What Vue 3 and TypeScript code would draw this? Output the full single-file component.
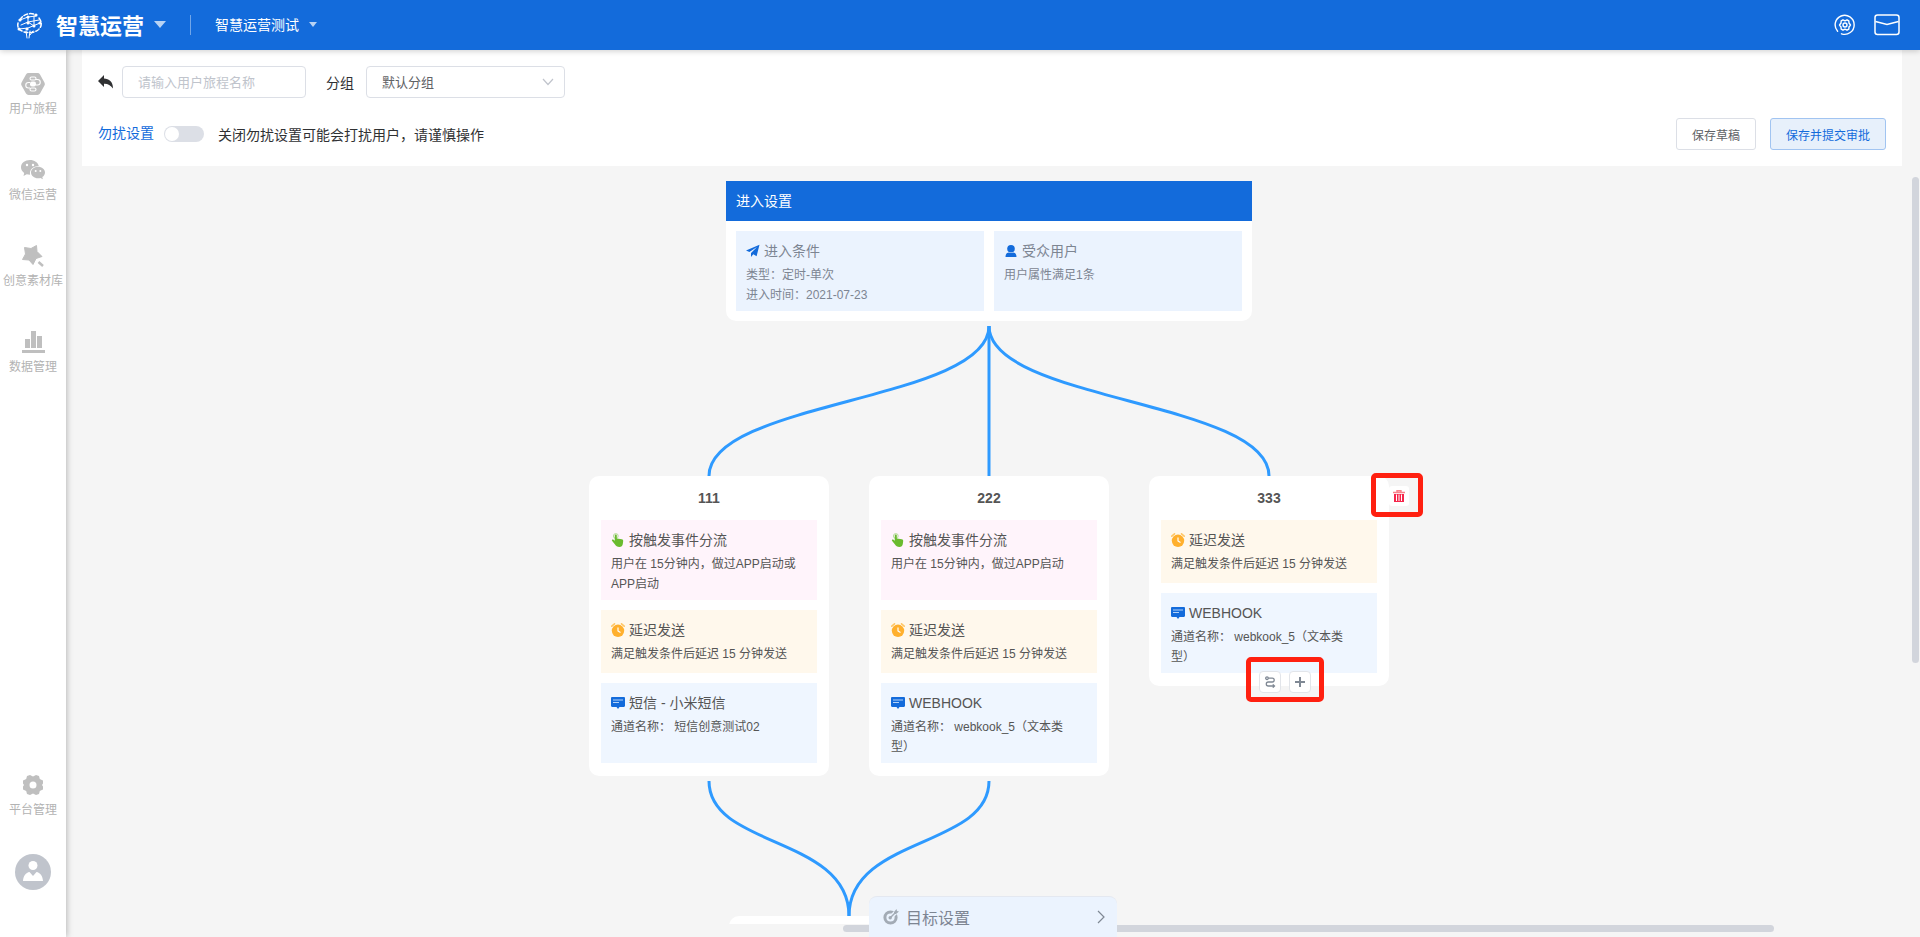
<script setup lang="ts">
import { ref } from 'vue'

type StepKind = 'event' | 'delay' | 'channel'

interface Step {
  kind: StepKind
  title: string
  text: string
  tall?: boolean
}

interface Branch {
  name: string
  steps: Step[]
  selected?: boolean
}

const journeyName = ref('')
const group = ref('默认分组')
const quietMode = ref(false)

const delayStep: Step = { kind: 'delay', title: '延迟发送', text: '满足触发条件后延迟 15 分钟发送' }
const webhookStep: Step = { kind: 'channel', title: 'WEBHOOK', text: '通道名称： webkook_5（文本类型）', tall: true }

const branches: Branch[] = [
  {
    name: '111',
    steps: [
      { kind: 'event', title: '按触发事件分流', text: '用户在 15分钟内，做过APP启动或APP启动', tall: true },
      delayStep,
      { kind: 'channel', title: '短信 - 小米短信', text: '通道名称： 短信创意测试02', tall: true },
    ],
  },
  {
    name: '222',
    steps: [
      { kind: 'event', title: '按触发事件分流', text: '用户在 15分钟内，做过APP启动', tall: true },
      delayStep,
      webhookStep,
    ],
  },
  { name: '333', steps: [delayStep, webhookStep], selected: true },
]
</script>

<template>
  <div class="app">
    <header class="topbar">
      <svg class="logo" viewBox="0 0 28 28" fill="none" stroke="#fff" stroke-width="1.5" stroke-linecap="round">
        <path d="M4 9C7 3 14 1 20 4M23 7c3 4 3 8 0 11M2 12c-1 4 1 7 4 8M8 21c4 1 10 1 14-2" stroke-dasharray="4 2" />
        <path d="M4 9l8-3 8-1M5 14l7-3 11-2M3 18l9-1 12-5M12 6v5l6 4M18 5v10M10 20l1 7M14 20l-1 7M17 20l-3 4" stroke-width="1" />
        <g fill="#fff" stroke="none">
          <circle cx="12" cy="6" r="1.5" /><circle cx="20" cy="4" r="1.6" /><circle cx="4" cy="9" r="1.6" />
          <circle cx="12" cy="12" r="1.5" /><circle cx="24" cy="12" r="1.6" /><circle cx="18" cy="15" r="1.5" />
          <circle cx="3" cy="18" r="1.5" /><circle cx="11" cy="18" r="1.6" />
        </g>
      </svg>
      <button class="brand" type="button">智慧运营<span class="caret caret-lg"></span></button>
      <span class="divider"></span>
      <button class="project" type="button">智慧运营测试<span class="caret"></span></button>
      <span class="spacer"></span>
      <button class="tool" type="button" aria-label="设置">
        <svg width="22" height="22" viewBox="0 0 22 22" fill="none" stroke="#fff" stroke-width="1.4" stroke-linecap="round">
          <path d="M3.6 17.2A9.500 9.500 0 1 1 7.500 19.800" />
          <path d="M9 5.800L11 6.800l2-1 1.800 1.100.2 2.100 1.500 2-1.500 2-.2 2.100L13 16.200l-2-1-2 1-1.800-1.100L7 13l-1.500-2L7 9l.2-2.100z" stroke-linejoin="round" />
          <circle cx="11" cy="11" r="2" />
        </svg>
      </button>
      <button class="tool" type="button" aria-label="消息">
        <svg width="26" height="22" viewBox="0 0 26 22" fill="none" stroke="#fff" stroke-width="1.5">
          <rect x="1" y="1" width="24" height="19.500" rx="2.500" />
          <path d="M1.500 7.500L13 10.500l11.500-3" />
        </svg>
      </button>
    </header>

    <div class="body">
      <nav class="sidebar">
        <a class="nav-item" href="#journey">
          <svg width="24" height="22" viewBox="0 0 24 22">
            <path fill="#bfbfbf" d="M7.500 0h9a3 3 0 0 1 2.500 1.400l4.300 7.800a3.500 3.500 0 0 1 0 3.600L19 20.600a3 3 0 0 1-2.500 1.400h-9A3 3 0 0 1 5 20.600L.7 12.800a3.500 3.500 0 0 1 0-3.600L5 1.400A3 3 0 0 1 7.500 0z" />
            <g fill="none" stroke="#fff" stroke-width="1.1">
              <rect x="9" y="4" width="6" height="3" rx="1.500" /><rect x="9" y="15" width="6" height="3" rx="1.500" />
              <path d="M9 9.500H7.500a2.200 2.200 0 0 0 0 5.500H9M15 6.500h1.500a2.200 2.200 0 0 1 0 5.500H15" />
            </g>
            <rect x="9" y="8.500" width="6" height="5" rx="2" fill="#fff" />
          </svg>
          <span>用户旅程</span>
        </a>
        <a class="nav-item" href="#wechat">
          <svg width="24" height="22" viewBox="0 0 24 22">
            <path fill="#bfbfbf" d="M9 1C4 1 0 4 0 8.300c0 2.400 1.300 4.300 3.200 5.600L2.500 17l3.200-1.700c1 .3 2.200.4 3.400.4-1-5 3-8.700 8.700-8.700C17 3.500 13.300 1 9 1z" />
            <path fill="#bfbfbf" d="M24 13.500c0-3.200-3.200-5.700-7-5.700s-7 2.500-7 5.700 3.200 5.800 7 5.800c.9 0 1.700-.1 2.500-.4l2.400 1.400-.6-2.300c1.700-1 2.700-2.700 2.700-4.500z" />
            <g fill="#fff"><circle cx="6" cy="6" r="1.200" /><circle cx="12" cy="6" r="1.200" /><circle cx="14.700" cy="12" r="1" /><circle cx="19.300" cy="12" r="1" /></g>
          </svg>
          <span>微信运营</span>
        </a>
        <a class="nav-item" href="#creative">
          <svg width="24" height="22" viewBox="0 0 24 22">
            <path fill="#bfbfbf" stroke="#bfbfbf" stroke-linejoin="round" d="M3.500 2.500l6.500 1L15.500.5l.5 6 5 5-6 2-3 6-4-4.500-6.500-.5 3-5.500z" />
            <path d="M17.500 17l4.500 4" stroke="#bfbfbf" stroke-width="2.4" />
          </svg>
          <span>创意素材库</span>
        </a>
        <a class="nav-item" href="#data">
          <svg width="24" height="22" viewBox="0 0 24 22" fill="#bfbfbf">
            <path d="M4 8h5v9H4zM10 0h5v17h-5zM16 5h5v12h-5zM1 19h23v3H1z" />
          </svg>
          <span>数据管理</span>
        </a>
        <a class="nav-item nav-bottom" href="#platform">
          <svg width="22" height="22" viewBox="0 0 22 22">
            <path fill="#bfbfbf" fill-rule="evenodd" d="M8 1l3 1.500L14 1l3 1 .8 3 3.200 1.500v3L20 11l1 1.500v3L17.800 17 17 20l-3 1-3-1.500L8 21l-3-1-.8-3L1 15.500v-3L2 11 1 9.500v-3L4.200 5 5 2zM11 7.500a3.500 3.500 0 1 0 0 7 3.500 3.500 0 0 0 0-7z" />
          </svg>
          <span>平台管理</span>
        </a>
        <button class="avatar" type="button" aria-label="个人中心">
          <svg width="36" height="36" viewBox="0 0 36 36">
            <circle cx="18" cy="18" r="18" fill="#c0c4cc" />
            <circle cx="18" cy="11.500" r="4.500" fill="#fff" />
            <path d="M8 27c.3-5 3-8.500 6.500-9l3.500 4 3.500-4c3.500.5 6.200 4 6.500 9z" fill="#fff" />
          </svg>
        </button>
      </nav>

      <main class="workspace">
        <section class="panel">
          <div class="row">
            <button class="back" type="button" aria-label="返回">
              <svg width="16" height="14" viewBox="0 0 16 14"><path fill="#303133" d="M6 0v3.500c5 .2 9 3 9 10C12.500 10 10 8.600 6 8.700V12L0 6z" /></svg>
            </button>
            <input v-model="journeyName" class="name" type="text" placeholder="请输入用户旅程名称" aria-label="用户旅程名称" />
            <label class="group-label" for="group">分组</label>
            <span class="select">
              <select id="group" v-model="group"><option>默认分组</option></select>
              <svg width="12" height="8" viewBox="0 0 12 8" fill="none" stroke="#c0c4cc" stroke-width="1.2"><path d="M1 1l5 5.500L11 1" /></svg>
            </span>
          </div>
          <div class="row">
            <label class="quiet" for="quiet">勿扰设置</label>
            <input id="quiet" v-model="quietMode" class="switch" type="checkbox" />
            <span class="hint">关闭勿扰设置可能会打扰用户，请谨慎操作</span>
            <span class="spacer"></span>
            <button class="btn" type="button">保存草稿</button>
            <button class="btn btn-primary" type="button">保存并提交审批</button>
          </div>
        </section>

        <section class="canvas">
          <div class="viewport">
            <div class="board">
              <article class="entry">
                <h2>进入设置</h2>
                <div class="entry-body">
                  <div class="entry-box">
                    <h3>
                      <svg width="14" height="14" viewBox="0 0 14 14"><path fill="#136bdb" d="M13.500.8L0 6.500l3.400 1.600L11 3 5 9v4l2.300-2.700 3.300 1.900z" /></svg>
                      进入条件
                    </h3>
                    <p>类型：定时-单次</p>
                    <p>进入时间：2021-07-23</p>
                  </div>
                  <div class="entry-box">
                    <h3>
                      <svg width="14" height="14" viewBox="0 0 14 14" fill="#136bdb"><circle cx="7" cy="4.800" r="3.800" /><path d="M1.500 13c0-3 1.500-4.500 3.500-4.500.8.800 3.200.8 4 0 2 0 3.500 1.500 3.500 4.500z" /></svg>
                      受众用户
                    </h3>
                    <p>用户属性满足1条</p>
                  </div>
                </div>
              </article>

              <svg class="links" width="800" height="150" viewBox="0 0 800 150">
                <path d="M400 0C400 75 120 75 120 150" />
                <path d="M400 0V150" />
                <path d="M400 0C400 75 680 75 680 150" />
              </svg>

              <div class="branches">
                <article v-for="branch in branches" :key="branch.name" class="branch">
                  <h2>{{ branch.name }}</h2>
                  <div v-for="(step, i) in branch.steps" :key="i" class="step" :class="[step.kind, { tall: step.tall }]">
                    <h3>
                      <svg v-if="step.kind === 'event'" width="14" height="14" viewBox="0 0 14 14">
                        <circle cx="4.800" cy="3" r="2.400" fill="none" stroke="#b5dd98" />
                        <path fill="#6abb2e" d="M3.800 2.500c0-1.300 2-1.300 2 0v3l5 .7c1 .2 1.500.8 1.400 1.800l-.4 3c-.3 2-1.500 3-3.300 3-2.300 0-3.600-1-4.500-2.500L1 7.700c-.5-1 .8-1.700 1.500-1l1.300 1.100z" />
                      </svg>
                      <svg v-else-if="step.kind === 'delay'" width="14" height="14" viewBox="0 0 14 14">
                        <path d="M.8 3.200L3.500.8M13.200 3.200L10.500.8" stroke="#ffc766" stroke-width="1.6" stroke-linecap="round" />
                        <circle cx="7" cy="7.800" r="6.200" fill="#ffb02e" />
                        <path d="M7 4.500V8l2.500 1.500" stroke="#fff" stroke-width="1.2" fill="none" />
                      </svg>
                      <svg v-else width="14" height="14" viewBox="0 0 14 14">
                        <path fill="#136bdb" d="M1.200 1h11.600C13.500 1 14 1.500 14 2.200v7.600c0 .7-.5 1.200-1.200 1.200H8.500L7 13l-1.500-2H1.200C.5 11 0 10.500 0 9.800V2.200C0 1.500.5 1 1.200 1z" />
                        <path d="M2 4h10M2 6.500h6" stroke="#b4d3f8" />
                      </svg>
                      {{ step.title }}
                    </h3>
                    <p>{{ step.text }}</p>
                  </div>
                  <template v-if="branch.selected">
                    <button class="remove" type="button" aria-label="删除">
                      <svg width="12" height="12" viewBox="0 0 12 12">
                        <path d="M0 2.500h12M4 2V.7h4V2" stroke="#f9828c" stroke-width="1.4" fill="none" />
                        <path fill="#f5264a" d="M1 4h10v8H1z" />
                        <path d="M3.500 4.500V11M6 4.500V11M8.500 4.500V11" stroke="#fff" />
                      </svg>
                    </button>
                    <span class="mark mark-remove"></span>
                    <div class="actions">
                      <button type="button" aria-label="添加分流">
                        <svg width="12" height="12" viewBox="0 0 12 12" fill="none" stroke="#7f8894" stroke-width="1.3">
                          <circle cx="3" cy="2.200" r="1.300" /><path d="M4.300 2.200h4a1.900 1.900 0 0 1 0 3.800h-4a1.900 1.900 0 0 0 0 4h6M8.800 8.400l1.700 1.600-1.700 1.600" />
                        </svg>
                      </button>
                      <button type="button" aria-label="添加步骤">
                        <svg width="12" height="12" viewBox="0 0 12 12" stroke="#7f8894" stroke-width="2"><path d="M6 1v10M1 6h10" /></svg>
                      </button>
                    </div>
                    <span class="mark mark-actions"></span>
                  </template>
                </article>
              </div>

              <svg class="links" width="800" height="135" viewBox="0 0 800 135">
                <path d="M120 0C120 67 260 55 260 135" />
                <path d="M400 0C400 67 260 55 260 135" />
              </svg>
              <div class="next"></div>
            </div>
          </div>
          <span class="bar bar-v"></span>
          <span class="bar bar-h"></span>
          <button class="goal" type="button">
            <svg width="16" height="16" viewBox="0 0 16 16">
              <circle cx="7.500" cy="8.500" r="5.600" fill="none" stroke="#a3abb5" stroke-width="3" />
              <path d="M8.500 7.500L14 2" stroke="#ebf3fe" stroke-width="4" />
              <path d="M7.500 8.500L12.500 3.500" stroke="#a3abb5" stroke-width="1.5" />
              <circle cx="7.200" cy="8.800" r="1.700" fill="#a3abb5" />
              <path fill="#a3abb5" d="M11 3l2.500-3 .5 2 2 .5L13 5h-2z" />
            </svg>
            <span>目标设置</span>
            <svg class="goal-arrow" width="8" height="14" viewBox="0 0 8 14" fill="none" stroke="#7f8894" stroke-width="1.2"><path d="M1 1l6 6-6 6" /></svg>
          </button>
        </section>
      </main>
    </div>
  </div>
</template>

<style>
body {
  margin: 0;
}
</style>

<style scoped>
.app {
  display: flex;
  flex-direction: column;
  height: 100vh;
  overflow: hidden;
  background: #f5f5f5;
  color: #303133;
  font-family: "Liberation Sans", "Noto Sans CJK SC", sans-serif;
  font-size: 14px;
}
.app *,
.app *::before {
  box-sizing: border-box;
}
button,
input,
select {
  font-family: inherit;
  margin: 0;
}
button {
  padding: 0;
  border: 0;
  background: none;
  color: inherit;
  cursor: pointer;
}
svg {
  display: block;
  flex: none;
}
h2,
h3,
p {
  margin: 0;
}
.spacer {
  flex: 1;
}
.topbar {
  position: relative;
  z-index: 3;
  display: flex;
  align-items: center;
  height: 50px;
  flex: none;
  padding: 0 20px 0 16px;
  background: #136bdb;
  box-shadow: 0 1px 6px rgba(0, 0, 0, 0.2);
  color: #fff;
}
.logo {
  width: 28px;
  height: 28px;
}
.brand,
.project {
  display: flex;
  align-items: center;
  padding-bottom: 2px;
}
.brand {
  gap: 10px;
  margin-left: 12px;
  font-size: 22px;
  font-weight: 700;
}
.project {
  gap: 10px;
  font-size: 14px;
}
.caret {
  border: 4px solid transparent;
  border-top: 5px solid #b8d3f4;
  border-bottom: 0;
}
.caret-lg {
  border-width: 7px 6px 0;
}
.divider {
  width: 1px;
  height: 20px;
  margin: 0 24px;
  background: #71a6e9;
}
.tool {
  margin-left: 20px;
}
.tool + .tool {
  margin-left: 18px;
}
.body {
  display: flex;
  flex: 1;
  min-height: 0;
}
.sidebar {
  position: relative;
  z-index: 2;
  display: flex;
  flex-direction: column;
  align-items: center;
  width: 66px;
  flex: none;
  padding: 23px 0 47px;
  background: #fff;
  box-shadow: 1px 0 6px rgba(0, 0, 0, 0.25);
}
.nav-item {
  display: flex;
  flex-direction: column;
  align-items: center;
  gap: 4px;
  margin-bottom: 40px;
  color: #b3b3b3;
  font-size: 12px;
  line-height: 20px;
  text-decoration: none;
  white-space: nowrap;
}
.nav-bottom {
  margin-top: auto;
  margin-bottom: 34px;
}
.workspace {
  display: flex;
  flex: 1;
  flex-direction: column;
  min-width: 0;
}
.panel {
  display: flex;
  flex-direction: column;
  gap: 20px;
  margin: 0 18px 0 16px;
  padding: 16px;
  background: #fff;
}
.row {
  display: flex;
  align-items: center;
  height: 32px;
}
.name,
.select select {
  height: 32px;
  border: 1px solid #dcdfe6;
  border-radius: 4px;
  background: #fff;
  color: #606266;
  outline: none;
  font-size: 13px;
}
.name {
  width: 184px;
  margin: 0 20px 0 8px;
  padding: 0 15px;
}
.name::placeholder {
  color: #c0c4cc;
}
.select {
  position: relative;
  width: 199px;
  margin-left: 12px;
}
.select select {
  width: 100%;
  padding: 0 30px 0 15px;
  appearance: none;
}
.select svg {
  position: absolute;
  top: 12px;
  right: 11px;
  pointer-events: none;
}
.quiet {
  margin-right: 10px;
  padding-bottom: 4px;
  color: #136bdb;
}
.switch {
  position: relative;
  width: 40px;
  height: 16px;
  border-radius: 8px;
  appearance: none;
  background: #dcdfe6;
  cursor: pointer;
}
.switch::before {
  content: "";
  position: absolute;
  top: 1px;
  left: 1px;
  width: 14px;
  height: 14px;
  border-radius: 50%;
  background: #fff;
}
.switch:checked {
  background: #136bdb;
}
.switch:checked::before {
  left: 25px;
}
.hint {
  margin-left: 14px;
}
.btn {
  height: 32px;
  padding: 0 15px;
  border: 1px solid #dcdfe6;
  border-radius: 3px;
  background: #fff;
  color: #606266;
  font-size: 12px;
}
.btn-primary {
  margin-left: 14px;
  border-color: #a1c4f1;
  background: #e7f0fb;
  color: #136bdb;
}
.canvas {
  position: relative;
  flex: 1;
  min-height: 0;
}
.viewport {
  height: calc(100% - 13px);
  margin-right: 8px;
  overflow: hidden;
}
.board {
  display: flex;
  flex-direction: column;
  align-items: center;
  width: 800px;
  margin: 0 auto;
  padding-top: 15px;
}
.entry {
  width: 526px;
  margin-bottom: 5px;
  border-radius: 0 0 10px 10px;
  background: #fff;
}
.entry h2 {
  padding: 0 10px;
  background: #136bdb;
  color: #fff;
  font-size: 14px;
  font-weight: 400;
  line-height: 40px;
}
.entry-body {
  display: flex;
  gap: 10px;
  padding: 10px;
}
.entry-box {
  flex: 1;
  height: 80px;
  padding: 10px;
  background: #ebf3fe;
  color: #7d8592;
}
h3 {
  display: flex;
  align-items: center;
  gap: 4px;
  margin-bottom: 4px;
  font-size: 14px;
  font-weight: 400;
  line-height: 20px;
}
p {
  font-size: 12px;
  line-height: 20px;
}
.links {
  fill: none;
  stroke: #2e9aff;
  stroke-width: 3;
}
.branches {
  display: flex;
  align-items: flex-start;
  gap: 40px;
  margin-bottom: 5px;
}
.branch {
  position: relative;
  display: flex;
  flex-direction: column;
  gap: 10px;
  width: 240px;
  padding: 0 12px 13px;
  border-radius: 10px;
  background: #fff;
  color: #555;
}
.branch h2 {
  margin-bottom: -10px;
  font-size: 14px;
  line-height: 44px;
  text-align: center;
}
.step {
  height: 63px;
  padding: 10px;
}
.tall {
  height: 80px;
}
.event {
  background: #fff4fb;
}
.delay {
  background: #fff8ec;
}
.channel {
  padding-right: 30px;
  background: #eff6ff;
}
.channel p {
  white-space: pre-wrap;
}
.remove {
  position: absolute;
  top: 10px;
  right: -20px;
  display: grid;
  place-items: center;
  width: 20px;
  height: 20px;
  border-radius: 3px;
  background: #fff;
}
.mark {
  position: absolute;
  border: 5px solid #ff2010;
  border-radius: 5px;
  pointer-events: none;
}
.mark-remove {
  top: -3px;
  right: -34px;
  width: 52px;
  height: 44px;
}
.actions {
  position: absolute;
  bottom: -7px;
  left: 110px;
  display: flex;
  gap: 8px;
}
.actions button {
  display: grid;
  place-items: center;
  width: 22px;
  height: 22px;
  border: 1px solid #e2e5ea;
  border-radius: 4px;
  background: #fff;
}
.mark-actions {
  bottom: -16px;
  left: 97px;
  width: 78px;
  height: 45px;
}
.next {
  align-self: flex-start;
  width: 240px;
  height: 60px;
  margin-left: 140px;
  border-radius: 10px;
  background: #fff;
}
.bar {
  position: absolute;
  border-radius: 4px;
  background: #d2d5dc;
}
.bar-v {
  top: 11px;
  right: 1px;
  width: 7px;
  height: 63%;
}
.bar-h {
  bottom: 5px;
  left: 777px;
  right: 146px;
  height: 7px;
}
.goal {
  position: absolute;
  right: 0;
  bottom: 0;
  left: 0;
  display: flex;
  align-items: center;
  width: 248px;
  height: 41px;
  margin: 0 auto;
  padding: 0 12px 0 14px;
  border-top: 1px solid #e4e8f0;
  border-radius: 8px 8px 0 0;
  background: #ebf3fe;
  color: #7d8592;
  font-size: 16px;
}
.goal span {
  margin-left: 7px;
}
.goal-arrow {
  margin-left: auto;
}
</style>
